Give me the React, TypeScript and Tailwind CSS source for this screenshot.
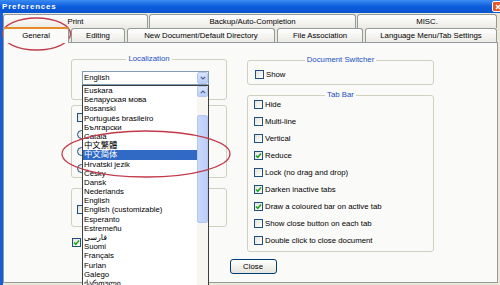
import React from "react";

function Check({ checked = false }: { checked?: boolean }) {
  return (
    <span className="flex h-[9px] w-[9px] shrink-0 items-center justify-center border border-[#1c5180] bg-gradient-to-br from-[#e3e2dc] to-white">
      {checked ? (
        <svg width="7" height="7" viewBox="0 0 7 7">
          <path d="M1 3.4 L2.8 5.3 L6 1.5" fill="none" stroke="#21a121" strokeWidth="1.5" />
        </svg>
      ) : null}
    </span>
  );
}

function Radio() {
  return (
    <span className="h-[9px] w-[9px] shrink-0 rounded-full border border-[#1c5180] bg-gradient-to-br from-[#e3e2dc] to-white" />
  );
}

function Group({
  title,
  className,
  children,
}: {
  title?: string;
  className: string;
  children?: React.ReactNode;
}) {
  return (
    <div className={"flex flex-col rounded-[3px] border border-[#d0d0bf] " + className}>
      {title ? (
        <span className="-mb-[4px] -mt-[6px] self-center bg-[#fafaf8] px-[2px] leading-[10px] text-[#2150c4]">
          {title}
        </span>
      ) : null}
      {children}
    </div>
  );
}

function Tab({ label, className }: { label: string; className: string }) {
  return (
    <div
      className={
        "flex h-full items-center justify-center whitespace-nowrap rounded-t-[3px] border border-b-0 border-[#919b9c] bg-gradient-to-b from-white to-[#ebeae4] " +
        className
      }
    >
      {label}
    </div>
  );
}

const tabBarItems: [string, boolean][] = [
  ["Hide", false],
  ["Multi-line", false],
  ["Vertical", false],
  ["Reduce", true],
  ["Lock (no drag and drop)", false],
  ["Darken inactive tabs", true],
  ["Draw a coloured bar on active tab", true],
  ["Show close button on each tab", false],
  ["Double click to close document", false],
];

const langs = [
  "Euskara",
  "Беларуская мова",
  "Bosanski",
  "Português brasileiro",
  "Български",
  "Català",
  "中文繁體",
  "中文简体",
  "Hrvatski jezik",
  "Česky",
  "Dansk",
  "Nederlands",
  "English",
  "English (customizable)",
  "Esperanto",
  "Estremeñu",
  "فارسی",
  "Suomi",
  "Français",
  "Furlan",
  "Galego",
  "ქართული",
];

export default function App() {
  return (
    <div className="relative h-[285px] w-[500px] overflow-hidden bg-[#ece9d8] font-['Liberation_Sans','DejaVu_Sans','Noto_Sans_CJK_SC',sans-serif] text-[7.8px] text-black">
      {/* Title bar */}
      <div className="flex h-[13px] items-center justify-between bg-gradient-to-b from-[#3b8cf2] via-[#0b5cdb] to-[#0a55d2] pl-[2px]">
        <span className="text-[8px] font-bold tracking-[0.8px] text-white">Preferences</span>
        <span className="-mr-[3px] flex h-[11px] w-[11px] items-center justify-center rounded-[2px] border border-white bg-[#e2572b]">
          <svg width="6" height="6" viewBox="0 0 6 6">
            <path d="M1 1 L5 5 M5 1 L1 5" stroke="white" strokeWidth="1.4" />
          </svg>
        </span>
      </div>

      <div className="flex h-[272px]">
        <div className="w-[3px] bg-[#1a5cd6]" />
        <div className="flex flex-col pt-[1px]">
          {/* Tab row 1 */}
          <div className="flex h-[14px] gap-[1px]">
            <Tab label="Print" className="w-[145px]" />
            <Tab label="Backup/Auto-Completion" className="w-[207px]" />
            <Tab label="MISC." className="w-[140px]" />
          </div>
          {/* Tab row 2 */}
          <div className="flex h-[14px] items-start gap-[2px]">
            <div className="relative z-10 -mt-[1px] flex h-[16px] w-[66px] items-center justify-center rounded-t-[3px] border-x border-t-2 border-x-[#919b9c] border-t-[#e68b2c] bg-[#fafaf8] pb-[1px]">
              General
            </div>
            <Tab label="Editing" className="w-[54px]" />
            <Tab label="New Document/Default Directory" className="w-[148px]" />
            <Tab label="File Association" className="w-[86px]" />
            <Tab label="Language Menu/Tab Settings" className="w-[132px]" />
          </div>

          {/* Panel */}
          <div className="flex h-[241px] w-[495px] flex-col border border-[#919b9c] bg-[#fafaf8]">
            <div className="flex items-start gap-[20px] pl-[67px] pt-[16px]">
              {/* Left column */}
              <div className="flex w-[156px] flex-col">
                <Group title="Localization" className="h-[41px]">
                  <div className="ml-[10px] mt-[11px] flex h-[14px] w-[127px] items-center border border-[#7f9db9] bg-white">
                    <span className="flex-1 pl-[1px]">English</span>
                    <span className="flex h-[12px] w-[11px] items-center justify-center rounded-[2px] border border-[#b6c7ef] bg-gradient-to-b from-[#dbe6fd] to-[#b7ccf8]">
                      <svg width="6" height="4" viewBox="0 0 6 4">
                        <path d="M0.8 0.8 L3 3 L5.2 0.8" fill="none" stroke="#4d6185" strokeWidth="1.2" />
                      </svg>
                    </span>
                  </div>
                </Group>
                <Group className="mt-[5px] h-[73px]">
                  <div className="mt-[3px] flex flex-col pl-[5px]">
                    <div className="flex h-[17px] items-center">
                      <Check />
                    </div>
                    <div className="flex h-[17px] items-center">
                      <Radio />
                    </div>
                    <div className="flex h-[17px] items-center">
                      <Radio />
                    </div>
                    <div className="flex h-[17px] items-center">
                      <Radio />
                    </div>
                  </div>
                </Group>
                <Group className="mt-[10px] h-[39px]">
                  <div className="ml-[5px] mt-[16px] flex items-center">
                    <Check />
                  </div>
                </Group>
                <div className="ml-[1px] mt-[11px] flex items-center">
                  <Check checked />
                </div>
              </div>

              {/* Right column */}
              <div className="flex w-[187px] flex-col pt-[1px]">
                <Group title="Document Switcher" className="h-[25px]">
                  <div className="ml-[7px] mt-[8px] flex items-center gap-[2px]">
                    <Check />
                    <span>Show</span>
                  </div>
                </Group>
                <Group title="Tab Bar" className="mt-[10px] h-[157px]">
                  <div className="flex flex-col pl-[6px]">
                    {tabBarItems.map(([label, checked]) => (
                      <div key={label} className="flex h-[17px] items-center gap-[2px]">
                        <Check checked={checked} />
                        <span>{label}</span>
                      </div>
                    ))}
                  </div>
                </Group>
              </div>
            </div>

            <div className="mt-[7px] flex justify-center pl-[5px]">
              <button className="flex h-[15px] w-[47px] items-center justify-center rounded-[3px] border border-[#003c74] bg-gradient-to-b from-white to-[#e6e4dc]">
                Close
              </button>
            </div>
          </div>
        </div>
      </div>

      {/* Open dropdown list */}
      <div className="absolute left-[82px] top-[85px] flex h-[210px] w-[127px] border border-[#3f3f3f] bg-white">
        <div className="flex w-[114px] flex-col">
          {langs.map((l) => {
            const cjk = l.startsWith("中");
            const sel = l === "中文简体";
            return (
              <div
                key={l}
                className={
                  "h-[9.2px] shrink-0 overflow-visible whitespace-nowrap pl-[1px] leading-[9.2px] " +
                  (cjk ? "text-[8.4px] " : "") +
                  (sel ? "bg-[#316ac5] text-white" : "")
                }
              >
                {l}
              </div>
            );
          })}
        </div>
        <div className="flex w-[11px] flex-col bg-[#f7f6f1]">
          <span className="flex h-[11px] w-[11px] items-center justify-center rounded-[2px] border border-[#b6c7ef] bg-gradient-to-b from-[#dbe6fd] to-[#b7ccf8]">
            <svg width="6" height="4" viewBox="0 0 6 4">
              <path d="M0.8 3.2 L3 1 L5.2 3.2" fill="none" stroke="#4d6185" strokeWidth="1.2" />
            </svg>
          </span>
          <span className="mt-[18px] h-[108px] w-[11px] rounded-[2px] border border-[#b6c7ef] bg-gradient-to-r from-[#c9d8fb] to-[#bccffa]" />
        </div>
      </div>

      {/* Red annotation ellipses */}
      <svg className="pointer-events-none absolute left-0 top-0" width="500" height="285" viewBox="0 0 500 285">
        <ellipse cx="36.5" cy="34" rx="34" ry="16" fill="none" stroke="#c23a4a" strokeWidth="1.3" />
        <ellipse cx="146" cy="154" rx="84" ry="23" fill="none" stroke="#c23a4a" strokeWidth="1.3" />
      </svg>
    </div>
  );
}
